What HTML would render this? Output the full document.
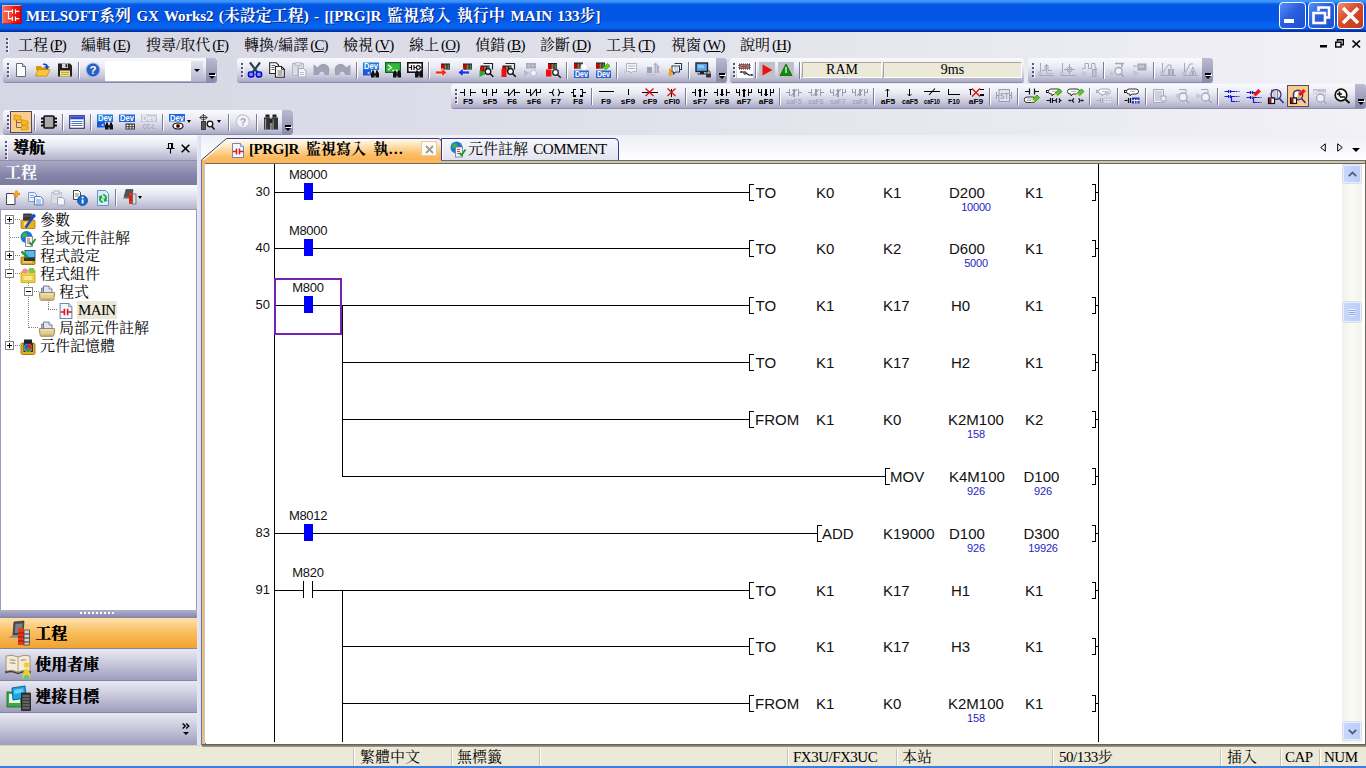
<!DOCTYPE html>
<html lang="zh-Hant"><head><meta charset="utf-8"><title>MELSOFT GX Works2</title>
<style>*{box-sizing:border-box;margin:0;padding:0}
html,body{width:1366px;height:768px;overflow:hidden}
body{position:relative;font-family:"Liberation Serif","Noto Serif CJK SC",serif;font-size:15px;color:#000;background:linear-gradient(90deg,#d6d6e4 0%,#dfdfea 40%,#f1f1f6 100%)}
.abs{position:absolute}
#title{position:absolute;left:0;top:0;width:1366px;height:32px;background:linear-gradient(180deg,#3c96fc 0px,#3a92fa 2px,#1568e8 3.500px,#0558e2 5px,#0355e4 8px,#0355e4 19px,#0560ee 23px,#0666f2 27px,#0558e0 29px,#0038b4 30.500px,#002c9e 32px)}
#title .cap{position:absolute;left:26px;top:5px;color:#fff;font-weight:bold;font-size:16px;line-height:21px;white-space:nowrap;text-shadow:1px 1px 0 #0a2a80}
#title .cap{word-spacing:1.800px}
#title .cap .l{letter-spacing:-.1px;font-size:15px}
.tbtn{position:absolute;top:2px;width:27px;height:27px;border:1px solid #fff;border-radius:4px;background:linear-gradient(135deg,#5a8ef2 0%,#2a5fe0 45%,#1d50d0 100%)}
.tbtn.tcl{background:linear-gradient(135deg,#f0906c 0%,#d9492a 45%,#c2391c 100%)}
#menubar{position:absolute;left:0;top:31px;width:1366px;height:27px}
.mi{position:absolute;top:4px;font-size:15px;line-height:20px;white-space:nowrap}
.mi .k{letter-spacing:-.8px;margin-left:2px}
.grip{position:absolute;width:2px;background:repeating-linear-gradient(180deg,#55557a 0 2px,transparent 2px 4px);box-shadow:1px 1px 0 rgba(255,255,255,.7)}
.tb{position:absolute;height:25px;border-radius:3px 0 3px 3px;background:linear-gradient(180deg,#f9f9fe 0%,#ececf5 35%,#c9c9dc 75%,#a9a8c4 100%);box-shadow:0 1px 0 #8c8bab}
.tb .ov{position:absolute;right:0;top:0;width:11px;height:100%;border-radius:0 3px 3px 0;background:linear-gradient(180deg,#bcbbd2 0%,#8a89ab 100%)}
.tb .ov i{position:absolute;left:3px;top:15px;width:6px;height:1.5px;background:#000;box-shadow:1px 1px 0 #fff}
.tb .ov b{position:absolute;left:3px;top:18px;width:0;height:0;border:3px solid transparent;border-top:3px solid #000;border-bottom:0}
.sep{position:absolute;width:2px;height:17px;border-left:1px solid #7c7b9e;border-right:1px solid #fff}
.ic{position:absolute;width:16px;height:16px;overflow:visible}
.hl{position:absolute;width:22px;height:22px;background:#fbcc8a;border:1px solid #4b4b6f}
.dda{position:absolute;width:0;height:0;border:2.500px solid transparent;border-top:3px solid #000;border-bottom:0}
.combo{position:absolute;width:98px;height:20px;background:#fff}
.combo .cbtn{position:absolute;right:0;top:0;width:12px;height:20px;background:linear-gradient(180deg,#e4e4f0,#b6b5cf)}
.combo .cbtn b{position:absolute;left:3px;top:8px;width:0;height:0;border:3px solid transparent;border-top:3px solid #000;border-bottom:0}
.ibox{position:absolute;height:16px;background:#ece9d8;border:1px solid #aca899;border-right-color:#fff;border-bottom-color:#fff;font-size:14px;line-height:14px;text-align:center}
/* nav */
#nav{position:absolute;left:0;top:135px;width:197px;height:610px;background:#fff;border-left:1px solid #9c9bb8;border-right:1px solid #9c9bb8}
.nhead{position:absolute;left:-1px;top:0;width:197px;height:25px;background:linear-gradient(180deg,#fdfdff 0%,#e6e6f0 45%,#b4b3cc 100%)}
.nhead .nt{position:absolute;left:13px;top:3px;font-weight:bold;font-size:16px;line-height:20px;text-shadow:.4px 0 0 #000}
.ncap{position:absolute;left:-1px;top:25px;width:197px;height:25px;background:linear-gradient(180deg,#a9a8c3 0%,#8584a8 60%,#7a799e 100%);color:#fff;font-weight:bold;font-size:16px;line-height:24px;padding-left:5px;border-top:1px solid #8f8eaf}
.ntb{position:absolute;left:-1px;top:50px;width:197px;height:25px;background:linear-gradient(180deg,#fbfbff 0%,#e4e4ef 45%,#b6b5ce 100%);border-bottom:1px solid #9897b5}
.tree{position:absolute;left:0;top:75px;width:195px;height:400px;font-size:15px}
.trow{position:absolute;left:0;height:18px;width:195px}
.tl{position:absolute;top:0;font-size:15px;line-height:18px;white-space:nowrap;padding:0 1px}
.tl.sel{background:#ece9d8;letter-spacing:-.6px}
.exp{z-index:2;position:absolute;width:9px;height:9px;border:1px solid #808080;background:#fff}
.exp i{position:absolute;left:1px;top:3px;width:5px;height:1px;background:#000}
.exp b{position:absolute;left:3px;top:1px;width:1px;height:5px;background:#000}
.hdot{position:absolute;height:1px;background:repeating-linear-gradient(90deg,#808080 0 1px,transparent 1px 2px)}
.vdot{position:absolute;width:1px;background:repeating-linear-gradient(180deg,#808080 0 1px,transparent 1px 2px)}
.nsplit{position:absolute;left:-1px;top:475px;width:197px;height:7px;background:linear-gradient(180deg,#b0afca,#8c8bb0)}
.nsplit i{position:absolute;left:80px;top:2px;width:36px;height:2px;background:repeating-linear-gradient(90deg,#fff 0 2px,transparent 2px 4px)}
.nbtn{position:absolute;left:-1px;width:197px;height:32px;background:linear-gradient(180deg,#e9e9f2 0%,#cdcddf 40%,#9e9dbd 100%);border-top:1px solid #8685a6;font-weight:bold;font-size:16px}
.nbtn span{position:absolute;left:35px;top:5px;line-height:22px;text-shadow:.4px 0 0 #000}
.nbtn.act{background:linear-gradient(180deg,#fde2ae 0%,#f9bf5f 45%,#f0a22c 100%)}
.nbtn.last{height:33px}
.nbtn em{position:absolute;left:180px;top:2px;font-style:normal;font-size:14px;font-weight:bold;line-height:18px;font-family:"Liberation Sans","Noto Sans CJK TC",sans-serif}
/* tabs */
.tabt{position:absolute;font-size:15px;line-height:21px;white-space:nowrap;word-spacing:1.500px}
.tabt.act{font-weight:bold;word-spacing:3.500px}
.tabt .l{letter-spacing:-.45px}
.tabx{position:absolute;width:16px;height:15px;background:#fdfbf2;border:1px solid #dccdb0}
.tab2{position:absolute;width:178px;height:23px;border:1px solid #2d3c9a;border-bottom:1px solid #6a6a70;border-radius:1px 5px 0 0;background:linear-gradient(180deg,#f6f6fb 0%,#ebebf5 60%,#e2e3f0 100%);box-shadow:inset 1px 1px 0 #fff}
/* editor */
#edframe{position:absolute;left:201px;top:160px;width:1165px;height:586px;background:#c9c5b5;border-left:1px solid #77768f;border-top:1px solid #6f6d60;border-right:1px solid #5a5742}
#edframe:before{content:"";position:absolute;left:3px;top:2px;width:1159px;height:581px;border:1px solid #6d6b58;border-bottom:2px solid #57533f;background:#fff}
#edorange{position:absolute;left:202px;top:161px;width:2px;height:583px;background:#ecbb88}
#edorange:after{content:"";position:absolute;left:0;top:-1px;width:239px;height:3px;background:#fbb95e}
#ed{position:absolute;left:205px;top:164px;width:1157px;height:579px;background:#fff;overflow:hidden;font-family:"Liberation Sans","Noto Sans CJK TC",sans-serif}
.ln{position:absolute;background:#000}
.ct{position:absolute;width:9px;height:17px;background:#0000ff}
.dl{position:absolute;width:80px;text-align:center;font-size:13px;letter-spacing:-.3px;line-height:14px;color:#111;margin-top:2px}
.sn{position:absolute;width:40px;text-align:right;font-size:13px;line-height:16px;color:#111;margin:1px 0 0 1px}
.it{position:absolute;font-size:15px;line-height:17px;white-space:nowrap;color:#111;margin-left:-1px}
.vl{position:absolute;width:60px;text-align:center;font-size:11px;line-height:12px;color:#2424c4;margin-top:-1px;letter-spacing:-.2px}
.br{position:absolute;width:5px;height:17px;border:1px solid #000;border-right:0}
.br.r{width:4px;border:1px solid #000;border-left:0}
.selbox{position:absolute;width:68px;height:57px;border:2px solid #7424b4}
.vsb{position:absolute;left:1137px;top:0;width:20px;height:579px;background:linear-gradient(90deg,#f1f1e8,#fbfbf6 50%,#f4f4ec)}
.sbtn{position:absolute;left:1px;width:18px;height:18px;border:1px solid #e8eefc;border-radius:2px;background:linear-gradient(90deg,#c9d7fb,#bccdf8);box-shadow:0 0 0 .5px #b4c4ee}
.sbtn.thumb i{position:absolute;left:5px;top:6px;width:6px;height:7px;background:repeating-linear-gradient(180deg,#eef3fe 0 1px,#8ea4dc 1px 2px)}
/* status */
#status{position:absolute;left:0;top:745px;width:1366px;height:21px;background:#ece9d8;border-top:1px solid #d6d2c2}
#status:before{content:"";position:absolute;left:202px;top:-2px;width:1164px;height:3px;background:linear-gradient(180deg,#5b5746,#a7a392)}
.st{position:absolute;top:2px;font-size:15px;line-height:18px;white-space:nowrap}
.st .l{letter-spacing:-.5px}
.ssep{position:absolute;top:3px;width:2px;height:17px;border-left:1px solid #c5c2b2;border-right:1px solid #fff}
#bottomline{position:absolute;left:0;top:766px;width:1366px;height:2px;background:#3b7fdc}
#gap{position:absolute}
#tabstrip{position:absolute;left:197px;top:135px;width:1169px;height:25px;background:linear-gradient(180deg,#eeeef6 0%,#f3f3f9 30%,#fbfbfd 75%,#ffffff 100%)}
#gapstrip{position:absolute;left:197px;top:136px;width:4px;height:609px;background:linear-gradient(90deg,#e6e9f7,#d9def2)}
</style></head>
<body>
<div id="title">
<svg class="ic" style="left:2px;top:5px;width:20px;height:19px" viewBox="0 0 20 19"><defs><linearGradient id="apg" x1="0" y1="0" x2="1" y2="0"><stop offset="0" stop-color="#f8a090"/><stop offset=".08" stop-color="#f06858"/><stop offset=".45" stop-color="#f04030"/><stop offset=".6" stop-color="#f01810"/><stop offset="1" stop-color="#e00808"/></linearGradient></defs><rect width="19.500" height="19" fill="url(#apg)"/><rect width="19.500" height="1" fill="#fbd0c8" opacity=".8"/><rect x="18.500" width="1" height="19" fill="#900" opacity=".6"/><rect y="18" width="19.500" height="1" fill="#900" opacity=".5"/><path d="M2 6.300h8.500M13.500 6.300h3.700M6.500 6.300v7.300h4M13.500 13.600h3.700M10.500 4.200v4.600M13.500 4.200v4.600M10.500 11.400v4.500M13.500 11.400v4.500" stroke="#fff" stroke-width="1.200" fill="none"/></svg>
<div class="cap"><span class="l">MELSOFT</span>系列 <span class="l">GX Works2 (</span>未設定工程<span class="l">) - [[PRG]R</span> 監視寫入 執行中 <span class="l">MAIN 133</span>步<span class="l">]</span></div>
<div class="tbtn" style="left:1279px"><svg class="ic" style="left:0px;top:0px;width:25px;height:25px" viewBox="0 0 25 25"><rect x="4" y="16" width="10" height="4" fill="#fff"/></svg></div>
<div class="tbtn" style="left:1308px"><svg class="ic" style="left:0px;top:0px;width:25px;height:25px" viewBox="0 0 25 25"><path d="M9.500 8v-3.500h10.500v10h-3" fill="none" stroke="#fff" stroke-width="2.600"/><rect x="4.500" y="10" width="11.500" height="10" fill="none" stroke="#fff" stroke-width="2.600"/></svg></div>
<div class="tbtn tcl" style="left:1337px"><svg class="ic" style="left:0px;top:0px;width:25px;height:25px" viewBox="0 0 25 25"><path d="M5 5L20 20M20 5L5 20" stroke="#fff" stroke-width="3.600"/></svg></div>
</div>
<div id="menubar">
<div class="grip" style="left:6px;top:7px;height:14px"></div>
<div class="mi" style="left:18px">工程<span class="k">(<u>P</u>)</span></div>
<div class="mi" style="left:81px">編輯<span class="k">(<u>E</u>)</span></div>
<div class="mi" style="left:146px">搜尋/取代<span class="k">(<u>F</u>)</span></div>
<div class="mi" style="left:244px">轉換/編譯<span class="k">(<u>C</u>)</span></div>
<div class="mi" style="left:343px">檢視<span class="k">(<u>V</u>)</span></div>
<div class="mi" style="left:409px">線上<span class="k">(<u>O</u>)</span></div>
<div class="mi" style="left:475px">偵錯<span class="k">(<u>B</u>)</span></div>
<div class="mi" style="left:540px">診斷<span class="k">(<u>D</u>)</span></div>
<div class="mi" style="left:606px">工具<span class="k">(<u>T</u>)</span></div>
<div class="mi" style="left:671px">視窗<span class="k">(<u>W</u>)</span></div>
<div class="mi" style="left:740px">說明<span class="k">(<u>H</u>)</span></div>
<svg class="ic" style="left:1320px;top:13px;width:8px;height:4px" viewBox="0 0 8 4"><rect x="0" y="1" width="7" height="2.500" fill="#000"/></svg><svg class="ic" style="left:1335px;top:8px;width:9px;height:9px" viewBox="0 0 9 9"><path d="M2.500 2.500v-1.800h5.800v5h-2" fill="none" stroke="#000" stroke-width="1.400"/><rect x="0.700" y="3.200" width="5.300" height="4.800" fill="none" stroke="#000" stroke-width="1.400"/></svg><svg class="ic" style="left:1352px;top:9px;width:9px;height:8px" viewBox="0 0 9 8"><path d="M0.500 0.500L8 7.500M8 0.500L0.500 7.500" stroke="#000" stroke-width="1.700"/></svg>
</div>
<div class="tb" style="left:3px;top:58px;width:214px;height:24px"><div class="grip" style="left:4px;top:5px;height:14px"></div><svg class="ic" style="left:10px;top:4px;width:16px;height:16px" viewBox="0 0 16 16"><path d="M3.500 1.500h6l3 3v10h-9z" fill="#fff" stroke="#6a6a7a"/><path d="M9.500 1.500v3h3" fill="#e8e8f0" stroke="#6a6a7a"/></svg><svg class="ic" style="left:32px;top:4px;width:16px;height:16px" viewBox="0 0 16 16"><path d="M1 4h5l1 1.500h5v3h-11z" fill="#d89a10"/><path d="M0.500 14l2.500-6.500h12l-3 6.500z" fill="#f8c838" stroke="#c88a08" stroke-width=".8"/><path d="M8 1.500c3.500-.5 5 1 5 3h2l-3 3-3-3h2c0-1-1-1.800-3-1.500z" fill="#1848c8"/></svg><svg class="ic" style="left:54px;top:4px;width:16px;height:16px" viewBox="0 0 16 16"><path d="M1 1.500h12l2 2v11h-14z" fill="#222"/><rect x="5" y="1.500" width="6" height="4.500" fill="#d8d8d8"/><rect x="8.500" y="2.200" width="1.700" height="3" fill="#222"/><rect x="3" y="8.500" width="10" height="6" fill="#f0e080"/><path d="M4 10.500h8M4 12.500h8" stroke="#b0a040" stroke-width=".8"/></svg><div class="sep" style="left:75px;top:4px"></div><svg class="ic" style="left:82px;top:4px;width:16px;height:16px" viewBox="0 0 16 16"><circle cx="8" cy="8" r="7" fill="#2a5ec0" stroke="#a8c0f0" stroke-width="1.200"/><text x="8" y="12.200" text-anchor="middle" font-size="11.500" fill="#fff" font-family="Liberation Sans,sans-serif" font-weight="bold">?</text></svg><div class="combo" style="left:102px;top:3px"><div class="cbtn"><b></b></div></div><div class="ov"><i></i><b></b></div></div>
<div class="tb" style="left:237px;top:58px;width:490px;height:24px"><div class="grip" style="left:4px;top:5px;height:14px"></div><svg class="ic" style="left:10px;top:4px;width:16px;height:16px" viewBox="0 0 16 16"><path d="M3 0.500l7.500 10M13 0.500l-7.500 10" stroke="#24404a" stroke-width="2.100"/><rect x="1.500" y="10" width="5.200" height="4.800" rx="1.500" fill="#7a9af4" stroke="#0a0ad8" stroke-width="1.700"/><rect x="9.300" y="10" width="5.200" height="4.800" rx="1.500" fill="#7a9af4" stroke="#0a0ad8" stroke-width="1.700"/></svg><svg class="ic" style="left:32px;top:4px;width:16px;height:16px" viewBox="0 0 16 16"><path d="M0.700 0.700h6.500l2.300 2.300v8.500h-8.800z" fill="#fff" stroke="#222" stroke-width="1.100"/><path d="M2.500 3.500h4M2.500 5.500h3M2.500 7.500h3" stroke="#555" stroke-width=".9"/><path d="M6.500 4.500h6l2.800 2.800v8h-8.800z" fill="#fff" stroke="#222" stroke-width="1.100"/><path d="M8.500 9h5M8.500 11h5M8.500 13h5" stroke="#555" stroke-width=".9"/><path d="M12.500 4.500v2.800h2.800" fill="none" stroke="#222" stroke-width=".9"/></svg><svg class="ic" style="left:54px;top:4px;width:16px;height:16px" viewBox="0 0 16 16"><path d="M1.500 1.500h11v9" fill="#dcdce6" stroke="#b4b4c4"/><rect x="1.500" y="1.500" width="5.500" height="12" fill="#dcdce6" stroke="#b4b4c4"/><rect x="4" y="0.800" width="6" height="2.400" fill="#eee" stroke="#a8a8b8" stroke-width=".8"/><path d="M7.500 6.500h5l2.500 2.500v6h-7.500z" fill="#f6f6fa" stroke="#a8a8b8"/><path d="M9 10.500h4M9 12.500h4" stroke="#b4b4c4" stroke-width=".9"/></svg><svg class="ic" style="left:76px;top:4px;width:16px;height:16px" viewBox="0 0 16 16"><path d="M0.500 2.500l4.500 3a5.500 5.500 0 0 1 11 4.500v3h-4.500a2.800 2.800 0 1 0-5.500 0h-5.500z" fill="#a2a2b6"/></svg><svg class="ic" style="left:98px;top:4px;width:16px;height:16px" viewBox="0 0 16 16"><path d="M15.500 2.500l-4.500 3a5.500 5.500 0 0 0-11 4.500v3h4.500a2.800 2.800 0 1 1 5.500 0h5.500z" fill="#a2a2b6"/></svg><div class="sep" style="left:119px;top:4px"></div><svg class="ic" style="left:126px;top:4px;width:16px;height:16px" viewBox="0 0 16 16"><rect x="0" y="0.500" width="16" height="7.500" fill="#1a78e0"/><rect x="0" y="8" width="8" height="5.500" fill="#1a58d8"/><path d="M6.500 9.500l-2.500 1.500 2.500 1.500z" fill="#cfe0ff"/><text x="1" y="7.4" font-size="8.500" fill="#fff" textLength="14" lengthAdjust="spacingAndGlyphs" font-family="Liberation Sans,sans-serif" font-weight="bold">Dev</text><path d="M9 8.5h2v2h-2zM13 8.5h2v2h-2zM8 10.5h3.500v5h-3.500zM12.5 10.5h3.500v5h-3.500zM11 11.5h2v2h-2z" fill="#111"/></svg><svg class="ic" style="left:148px;top:4px;width:16px;height:16px" viewBox="0 0 16 16"><rect x="0.600" y="0.600" width="14.800" height="9.800" fill="#30b838" stroke="#1a5a2a" stroke-width="1.200"/><path d="M3 3l3.500 2.500-3.500 2.500M7.500 8.500h5" stroke="#fff" stroke-width="1.300" fill="none"/><path d="M9 8.5h2v2h-2zM13 8.5h2v2h-2zM8 10.5h3.500v5h-3.500zM12.5 10.5h3.500v5h-3.500zM11 11.5h2v2h-2z" fill="#111"/></svg><svg class="ic" style="left:170px;top:4px;width:16px;height:16px" viewBox="0 0 16 16"><rect x="0.800" y="0.800" width="14.400" height="9.400" fill="#fff" stroke="#111" stroke-width="1.600"/><path d="M2 5.500h2.500M4.500 3v5M7 3v5M7 5.500h2.500M13 5.500h1.500" stroke="#111" stroke-width="1.200" fill="none"/><circle cx="11.300" cy="5.500" r="1.900" fill="#fff" stroke="#111" stroke-width="1.200"/><path d="M9 8.5h2v2h-2zM13 8.5h2v2h-2zM8 10.5h3.500v5h-3.500zM12.5 10.5h3.500v5h-3.500zM11 11.5h2v2h-2z" fill="#111"/></svg><div class="sep" style="left:191px;top:4px"></div><svg class="ic" style="left:198px;top:4px;width:16px;height:16px" viewBox="0 0 16 16"><rect x="6" y="1.5" width="9" height="6" fill="#222"/><rect x="6" y="2.5" width="3" height="5" fill="#c00"/><rect x="9.5" y="2.5" width="2" height="5" fill="#8a7a50"/><rect x="12.5" y="2.5" width="2" height="5" fill="#5a7a50"/><path d="M0.300 9h6.700v-2.800l5 4.300-5 4.300v-2.800h-6.700z" fill="#f03010" stroke="#fff" stroke-width=".6"/></svg><svg class="ic" style="left:220px;top:4px;width:16px;height:16px" viewBox="0 0 16 16"><rect x="6" y="1.5" width="9" height="6" fill="#222"/><rect x="6" y="2.5" width="3" height="5" fill="#c00"/><rect x="9.5" y="2.5" width="2" height="5" fill="#8a7a50"/><rect x="12.5" y="2.5" width="2" height="5" fill="#5a7a50"/><path d="M12.500 9h-6.500v-2.800l-5 4.300 5 4.300v-2.800h6.500z" fill="#1838e8" stroke="#fff" stroke-width=".6"/></svg><svg class="ic" style="left:242px;top:4px;width:16px;height:16px" viewBox="0 0 16 16"><path d="M4.500 1.500h9v6" fill="none" stroke="#222" stroke-width="1.200"/><rect x="1.5" y="3.5" width="9" height="6" fill="#222"/><rect x="1.5" y="4.5" width="3" height="5" fill="#c00"/><rect x="5.0" y="4.5" width="2" height="5" fill="#8a7a50"/><rect x="8.0" y="4.5" width="2" height="5" fill="#5a7a50"/><path d="M0.500 8.500l7 3-7 3.500z" fill="#20b020"/><rect x="1" y="5" width="3" height="3.500" fill="#e01010"/><path d="M10.959999999999999 11.459999999999999L14.3 14.8" stroke="#111" stroke-width="1.600"/><circle cx="9" cy="9.5" r="2.8" fill="#fff" stroke="#111" stroke-width="1.300"/></svg><svg class="ic" style="left:264px;top:4px;width:16px;height:16px" viewBox="0 0 16 16"><path d="M4.500 1.500h9v6" fill="none" stroke="#222" stroke-width="1.200"/><rect x="1.5" y="3.5" width="9" height="6" fill="#222"/><rect x="1.5" y="4.5" width="3" height="5" fill="#c00"/><rect x="5.0" y="4.5" width="2" height="5" fill="#8a7a50"/><rect x="8.0" y="4.5" width="2" height="5" fill="#5a7a50"/><rect x="0.500" y="7" width="5" height="8" fill="#f01010"/><path d="M11.459999999999999 11.459999999999999L14.8 14.8" stroke="#111" stroke-width="1.600"/><circle cx="9.5" cy="9.5" r="2.8" fill="#fff" stroke="#111" stroke-width="1.300"/></svg><svg class="ic" style="left:286px;top:4px;width:16px;height:16px" viewBox="0 0 16 16"><rect x="3" y="1" width="10" height="5.500" fill="#a8a8bc"/><path d="M6 1v5.500M9.500 1v5.500M3 3.500h10" stroke="#c8c8d8" stroke-width=".8"/><path d="M1 8l5 3-5 3.500z" fill="#b8b8c8"/><circle cx="10.500" cy="11" r="3" fill="#f4f4f8" stroke="#b8b8c8"/></svg><svg class="ic" style="left:308px;top:4px;width:16px;height:16px" viewBox="0 0 16 16"><rect x="3" y="1" width="9" height="6" fill="#222"/><rect x="3" y="2" width="3" height="5" fill="#c00"/><rect x="6.5" y="2" width="2" height="5" fill="#8a7a50"/><rect x="9.5" y="2" width="2" height="5" fill="#5a7a50"/><rect x="1" y="7.500" width="5.500" height="7" fill="#f01010"/><path d="M12.459999999999999 12.459999999999999L15.8 15.8" stroke="#223" stroke-width="1.600"/><circle cx="10.5" cy="10.5" r="2.8" fill="#fff" stroke="#223" stroke-width="1.300"/></svg><div class="sep" style="left:329px;top:4px"></div><svg class="ic" style="left:336px;top:4px;width:16px;height:16px" viewBox="0 0 16 16"><rect x="1" y="0.5" width="9" height="6" fill="#222"/><rect x="1" y="1.5" width="3" height="5" fill="#c00"/><rect x="4.5" y="1.5" width="2" height="5" fill="#8a7a50"/><rect x="7.5" y="1.5" width="2" height="5" fill="#5a7a50"/><circle cx="11" cy="5" r="3.200" fill="#fff" stroke="#dde" stroke-width=".6"/><rect x="1" y="8.500" width="15" height="7.500" fill="#2a68d0"/><text x="2" y="15.4" font-size="8.500" fill="#fff" textLength="13" lengthAdjust="spacingAndGlyphs" font-family="Liberation Sans,sans-serif" font-weight="bold">Dev</text></svg><svg class="ic" style="left:358px;top:4px;width:16px;height:16px" viewBox="0 0 16 16"><rect x="1" y="0.5" width="9" height="6" fill="#222"/><rect x="1" y="1.5" width="3" height="5" fill="#c00"/><rect x="4.5" y="1.5" width="2" height="5" fill="#8a7a50"/><rect x="7.5" y="1.5" width="2" height="5" fill="#5a7a50"/><path d="M8 5.500l4.500-4 2.500 2.500-4.500 4z" fill="#58d020" stroke="#2a8010" stroke-width=".6"/><path d="M7 8.500l1-3 2.500 2.500z" fill="#e8d840"/><rect x="1" y="8.500" width="15" height="7.500" fill="#2a68d0"/><text x="2" y="15.4" font-size="8.500" fill="#fff" textLength="13" lengthAdjust="spacingAndGlyphs" font-family="Liberation Sans,sans-serif" font-weight="bold">Dev</text></svg><div class="sep" style="left:379px;top:4px"></div><svg class="ic" style="left:386px;top:4px;width:16px;height:16px" viewBox="0 0 16 16"><path d="M3.500 1.500h10v8h-4l-2 2v-2h-4z" fill="#f6f6fa" stroke="#b4b4c6"/><path d="M5 4h7M5 6.500h7" stroke="#b4b4c6"/><path d="M1.500 8v6h5" fill="none" stroke="#c4c4d4"/></svg><svg class="ic" style="left:408px;top:4px;width:16px;height:16px" viewBox="0 0 16 16"><rect x="2" y="5" width="5" height="6" fill="#a0a0b4"/><path d="M8 3l2.500-2.500 2.500 2.500h-1.500v8h-2v-8zM11 5l2-2 2 2h-1v6h-2v-6z" fill="#b0b0c4"/><path d="M1 13h10" stroke="#b8b8c8"/></svg><svg class="ic" style="left:430px;top:4px;width:16px;height:16px" viewBox="0 0 16 16"><path d="M7.500 1.500h7v6h-2" fill="#fff" stroke="#223a5a" stroke-width="1.100"/><path d="M5 4h7.500v6h-4l-2 2v-2h-1.500z" fill="#fff" stroke="#223a5a" stroke-width="1.100"/><path d="M7 6h4M7 8h4" stroke="#8a98b8" stroke-width=".8"/><path d="M2 6.500h3.500v2h-1.500v3h2l-2.800 3.500-2.800-3.500h1.600z" fill="#f8a010"/></svg><div class="sep" style="left:451px;top:4px"></div><svg class="ic" style="left:458px;top:4px;width:16px;height:16px" viewBox="0 0 16 16"><rect x="1" y="1" width="11.500" height="8.500" fill="#58a8f0" stroke="#222" stroke-width="1.400"/><rect x="3" y="3" width="6" height="3" fill="#88c8f8"/><path d="M5 10h4v1.500h2.500v1h-9v-1h2.500z" fill="#222"/><rect x="11" y="11.500" width="5" height="4" rx="1" fill="#333"/><path d="M12 11.500v-1.200a1.500 1.500 0 0 1 3 0v1.200" fill="none" stroke="#333"/></svg><div class="ov"><i></i><b></b></div></div>
<div class="tb" style="left:730px;top:58px;width:294px;height:24px;border-radius:3px"><div class="grip" style="left:3px;top:5px;height:14px"></div><svg class="ic" style="left:7px;top:4px;width:16px;height:16px" viewBox="0 0 16 16"><rect x="0" y="0" width="16" height="16" fill="#fff"/><rect x="2" y="2" width="11" height="5" fill="#a07070" stroke="#222" stroke-width="1" stroke-dasharray="1 1"/><path d="M5 4.500h5" stroke="#c03030"/><path d="M4 10h3l5 3h3M4 9v2M15 12v2" stroke="#111" stroke-width="1.200" fill="none"/><circle cx="8" cy="11" r="1.200" fill="#fff" stroke="#111"/></svg><div class="sep" style="left:25px;top:4px"></div><svg class="ic" style="left:29px;top:4px;width:16px;height:16px" viewBox="0 0 16 16"><rect x="0" y="0" width="16" height="16" fill="#c0c0c8"/><path d="M3.500 2.500l10 5.500-10 5.500z" fill="#f01010"/></svg><svg class="ic" style="left:48px;top:4px;width:16px;height:16px" viewBox="0 0 16 16"><rect x="0" y="0" width="16" height="16" fill="#c0c0c8"/><path d="M8 2l6 11.500h-12z" fill="#108a10" stroke="#0a6a0a" stroke-width=".8"/><path d="M8 5v6" stroke="#d8f8d8" stroke-width="1.400"/></svg><div class="sep" style="left:69px;top:4px"></div><div class="ibox" style="left:72px;top:4px;width:80px">RAM</div><div class="ibox" style="left:153px;top:4px;width:139px">9ms</div></div>
<div class="tb" style="left:1028px;top:58px;width:185px;height:24px"><div class="grip" style="left:4px;top:5px;height:14px"></div><svg class="ic" style="left:10px;top:4px;width:16px;height:16px" viewBox="0 0 16 16"><path d="M2.500 1v13M0 13.500h16" stroke="#a6a6bc" fill="none"/><path d="M4 8.500h3v-5h3v5h4M8.500 2v9" stroke="#a6a6bc" fill="none"/><path d="M0 9l5 2.500-5 2.500z" fill="#c4c4d4"/><path d="M9 11.500h6" stroke="#a6a6bc" stroke-dasharray="2 1"/></svg><svg class="ic" style="left:32px;top:4px;width:16px;height:16px" viewBox="0 0 16 16"><path d="M2.500 1v13M0 13.500h16" stroke="#a6a6bc" fill="none"/><path d="M4 7.500h11M9.500 2v10" stroke="#a6a6bc" fill="none"/><circle cx="9.500" cy="7.500" r="2.500" fill="none" stroke="#a6a6bc"/><path d="M0 9l5 2.500-5 2.500z" fill="#c4c4d4"/></svg><svg class="ic" style="left:54px;top:4px;width:16px;height:16px" viewBox="0 0 16 16"><path d="M0 6.500h3v-5h3.500v5h3v-5h3.500v5h2" stroke="#a6a6bc" fill="none"/><rect x="10.500" y="7.500" width="3.500" height="7" fill="#c4c4d4" stroke="#a6a6bc"/><path d="M0 9l6 3-6 3z" fill="#c4c4d4"/></svg><div class="sep" style="left:75px;top:4px"></div><svg class="ic" style="left:82px;top:4px;width:16px;height:16px" viewBox="0 0 16 16"><path d="M5 1.500h9M12 1.500v4" stroke="#a6a6bc" stroke-width="1.600" fill="none"/><circle cx="8.500" cy="9" r="3.500" fill="#f0f0f6" stroke="#a6a6bc" stroke-width="1.300"/><path d="M11 12l3 3" stroke="#a6a6bc" stroke-width="1.600"/><path d="M0 9l5 2.500-5 2.500z" fill="#c4c4d4"/></svg><svg class="ic" style="left:104px;top:4px;width:16px;height:16px" viewBox="0 0 16 16"><rect x="5.500" y="1.500" width="9" height="7" fill="#a6a6bc"/><rect x="7" y="3" width="5" height="3" fill="#c4c4d4"/><path d="M1 4h4" stroke="#a6a6bc"/><path d="M1 8l7 3.500-7 3.500z" fill="#c4c4d4"/></svg><div class="sep" style="left:125px;top:4px"></div><svg class="ic" style="left:132px;top:4px;width:16px;height:16px" viewBox="0 0 16 16"><path d="M2.500 1v13M0 13.500h16" stroke="#a6a6bc" fill="none"/><path d="M3 11l5-8h3v10" stroke="#a6a6bc" fill="none"/><rect x="8" y="7" width="2" height="6" fill="#a6a6bc"/><rect x="12" y="7" width="2" height="6" fill="#a6a6bc"/><path d="M0 9l5 2.500-5 2.500z" fill="#c4c4d4"/></svg><svg class="ic" style="left:154px;top:4px;width:16px;height:16px" viewBox="0 0 16 16"><path d="M2.500 1v13M0 13.500h16" stroke="#a6a6bc" fill="none"/><path d="M3 11l5-9h3M8 13l3-8 3 8" stroke="#a6a6bc" fill="none"/><rect x="10" y="9" width="2" height="4" fill="#a6a6bc"/><path d="M0 9l5 2.500-5 2.500z" fill="#c4c4d4"/></svg><div class="ov"><i></i><b></b></div></div>
<div class="tb" style="left:451px;top:84px;width:915px;height:24px"><div class="grip" style="left:4px;top:5px;height:14px"></div><svg class="ic" style="left:9px;top:4px;width:16px;height:16px" viewBox="0 0 16 16"><g stroke="#000" stroke-width="1.100" fill="none" shape-rendering="crispEdges"><path d="M0 4.500h4M11 4.500h4.500M4.500 1v7M10.500 1v7"/></g><text x="3.0" y="15.600" font-size="7.6" fill="#000" textLength="10" lengthAdjust="spacingAndGlyphs" font-family="Liberation Sans,sans-serif" font-weight="bold">F5</text></svg><svg class="ic" style="left:31px;top:4px;width:16px;height:16px" viewBox="0 0 16 16"><g stroke="#000" stroke-width="1.100" fill="none" shape-rendering="crispEdges"><path d="M0.500 1v3.500h4M4.500 1v7M10.500 1v7M10.500 4.500h4v-3.500"/></g><text x="0.8" y="15.600" font-size="7.6" fill="#000" textLength="14.5" lengthAdjust="spacingAndGlyphs" font-family="Liberation Sans,sans-serif" font-weight="bold">sF5</text></svg><svg class="ic" style="left:53px;top:4px;width:16px;height:16px" viewBox="0 0 16 16"><g stroke="#000" stroke-width="1.100" fill="none" shape-rendering="crispEdges"><path d="M0 4.500h4M11 4.500h4.500M4.500 1v7M10.500 1v7"/><path d="M10.500 1l-6 7" shape-rendering="auto"/></g><text x="3.0" y="15.600" font-size="7.6" fill="#000" textLength="10" lengthAdjust="spacingAndGlyphs" font-family="Liberation Sans,sans-serif" font-weight="bold">F6</text></svg><svg class="ic" style="left:75px;top:4px;width:16px;height:16px" viewBox="0 0 16 16"><g stroke="#000" stroke-width="1.100" fill="none" shape-rendering="crispEdges"><path d="M0.500 1v3.500h4M4.500 1v7M10.500 1v7M10.500 4.500h4v-3.500"/><path d="M10.500 1l-6 7" shape-rendering="auto"/></g><text x="0.8" y="15.600" font-size="7.6" fill="#000" textLength="14.5" lengthAdjust="spacingAndGlyphs" font-family="Liberation Sans,sans-serif" font-weight="bold">sF6</text></svg><svg class="ic" style="left:97px;top:4px;width:16px;height:16px" viewBox="0 0 16 16"><g stroke="#000" stroke-width="1.100" fill="none" shape-rendering="crispEdges"><path d="M0.500 4.500h3M12 4.500h3.500"/><path d="M6 1q-3 3.500 0 7M10 1q3 3.500 0 7" shape-rendering="auto"/></g><text x="3.0" y="15.600" font-size="7.6" fill="#000" textLength="10" lengthAdjust="spacingAndGlyphs" font-family="Liberation Sans,sans-serif" font-weight="bold">F7</text></svg><svg class="ic" style="left:119px;top:4px;width:16px;height:16px" viewBox="0 0 16 16"><g stroke="#000" stroke-width="1.100" fill="none" shape-rendering="crispEdges"><path d="M0.500 4.500h3M12.500 4.500h3M6 1.500h-2.500v6.500h2.500M10 1.500h2.500v6.500h-2.500"/></g><text x="3.0" y="15.600" font-size="7.6" fill="#000" textLength="10" lengthAdjust="spacingAndGlyphs" font-family="Liberation Sans,sans-serif" font-weight="bold">F8</text></svg><div class="sep" style="left:140px;top:4px"></div><svg class="ic" style="left:147px;top:4px;width:16px;height:16px" viewBox="0 0 16 16"><g stroke="#000" stroke-width="1.100" fill="none" shape-rendering="crispEdges"><path d="M0.500 3.500h15"/></g><text x="3.0" y="15.600" font-size="7.6" fill="#000" textLength="10" lengthAdjust="spacingAndGlyphs" font-family="Liberation Sans,sans-serif" font-weight="bold">F9</text></svg><svg class="ic" style="left:169px;top:4px;width:16px;height:16px" viewBox="0 0 16 16"><g stroke="#000" stroke-width="1.100" fill="none" shape-rendering="crispEdges"><path d="M8.500 0.500v6"/></g><text x="0.8" y="15.600" font-size="7.6" fill="#000" textLength="14.5" lengthAdjust="spacingAndGlyphs" font-family="Liberation Sans,sans-serif" font-weight="bold">sF9</text></svg><svg class="ic" style="left:191px;top:4px;width:16px;height:16px" viewBox="0 0 16 16"><g stroke="#000" stroke-width="1.100" fill="none" shape-rendering="crispEdges"><path d="M0 4.500h16"/><path d="M3.500 0.500l8 7.500M11.500 0.500l-8 7.500" stroke="#e01010" stroke-width="1.300" shape-rendering="auto"/></g><text x="0.8" y="15.600" font-size="7.6" fill="#000" textLength="14.5" lengthAdjust="spacingAndGlyphs" font-family="Liberation Sans,sans-serif" font-weight="bold">cF9</text></svg><svg class="ic" style="left:213px;top:4px;width:16px;height:16px" viewBox="0 0 16 16"><g stroke="#000" stroke-width="1.100" fill="none" shape-rendering="crispEdges"><path d="M7.500 0.500v8"/><path d="M3.500 0.500l8 7.500M11.500 0.500l-8 7.500" stroke="#e01010" stroke-width="1.300" shape-rendering="auto"/></g><text x="0.0" y="15.600" font-size="7.4" fill="#000" textLength="16" lengthAdjust="spacingAndGlyphs" font-family="Liberation Sans,sans-serif" font-weight="bold">cFI0</text></svg><div class="sep" style="left:234px;top:4px"></div><svg class="ic" style="left:241px;top:4px;width:16px;height:16px" viewBox="0 0 16 16"><g stroke="#000" stroke-width="1.100" fill="none" shape-rendering="crispEdges"><path d="M0 4.500h3M12.500 4.500h3.500M3.500 1v7M12.500 1v7"/><path d="M8 8.500v-7.500"/><path d="M6 3l2-2 2 2" shape-rendering="auto" stroke-width=".9"/></g><text x="0.8" y="15.600" font-size="7.6" fill="#000" textLength="14.5" lengthAdjust="spacingAndGlyphs" font-family="Liberation Sans,sans-serif" font-weight="bold">sF7</text></svg><svg class="ic" style="left:263px;top:4px;width:16px;height:16px" viewBox="0 0 16 16"><g stroke="#000" stroke-width="1.100" fill="none" shape-rendering="crispEdges"><path d="M0 4.500h3M12.500 4.500h3.500M3.500 1v7M12.500 1v7"/><path d="M8 0.500v7.500"/><path d="M6 6l2 2 2-2" shape-rendering="auto" stroke-width=".9"/></g><text x="0.8" y="15.600" font-size="7.6" fill="#000" textLength="14.5" lengthAdjust="spacingAndGlyphs" font-family="Liberation Sans,sans-serif" font-weight="bold">sF8</text></svg><svg class="ic" style="left:285px;top:4px;width:16px;height:16px" viewBox="0 0 16 16"><g stroke="#000" stroke-width="1.100" fill="none" shape-rendering="crispEdges"><path d="M0.500 1v3.500h3M3.500 1v7M12.500 1v7M12.500 4.500h3v-3.500"/><path d="M8 8.500v-7.500"/><path d="M6 3l2-2 2 2" shape-rendering="auto" stroke-width=".9"/></g><text x="0.8" y="15.600" font-size="7.6" fill="#000" textLength="14.5" lengthAdjust="spacingAndGlyphs" font-family="Liberation Sans,sans-serif" font-weight="bold">aF7</text></svg><svg class="ic" style="left:307px;top:4px;width:16px;height:16px" viewBox="0 0 16 16"><g stroke="#000" stroke-width="1.100" fill="none" shape-rendering="crispEdges"><path d="M0.500 1v3.500h3M3.500 1v7M12.500 1v7M12.500 4.500h3v-3.500"/><path d="M8 0.500v7.500"/><path d="M6 6l2 2 2-2" shape-rendering="auto" stroke-width=".9"/></g><text x="0.8" y="15.600" font-size="7.6" fill="#000" textLength="14.5" lengthAdjust="spacingAndGlyphs" font-family="Liberation Sans,sans-serif" font-weight="bold">aF8</text></svg><div class="sep" style="left:328px;top:4px"></div><svg class="ic" style="left:335px;top:4px;width:16px;height:16px" viewBox="0 0 16 16"><g stroke="#9a9ab2" stroke-width="1.100" fill="none" shape-rendering="crispEdges"><path d="M0 4.500h3M12.500 4.500h3.500M3.500 1v7M12.500 1v7"/><path d="M8 8.500v-7.500"/><path d="M6 3l2-2 2 2" shape-rendering="auto" stroke-width=".9"/><path d="M11 1l-6 7" shape-rendering="auto"/></g><text x="0.2" y="15.600" font-size="7.2" fill="#9a9ab2" textLength="15.5" lengthAdjust="spacingAndGlyphs" font-family="Liberation Sans,sans-serif" >saF5</text></svg><svg class="ic" style="left:357px;top:4px;width:16px;height:16px" viewBox="0 0 16 16"><g stroke="#9a9ab2" stroke-width="1.100" fill="none" shape-rendering="crispEdges"><path d="M0 4.500h3M12.500 4.500h3.500M3.500 1v7M12.500 1v7"/><path d="M8 0.500v7.500"/><path d="M6 6l2 2 2-2" shape-rendering="auto" stroke-width=".9"/><path d="M11 1l-6 7" shape-rendering="auto"/></g><text x="0.2" y="15.600" font-size="7.2" fill="#9a9ab2" textLength="15.5" lengthAdjust="spacingAndGlyphs" font-family="Liberation Sans,sans-serif" >saF6</text></svg><svg class="ic" style="left:379px;top:4px;width:16px;height:16px" viewBox="0 0 16 16"><g stroke="#9a9ab2" stroke-width="1.100" fill="none" shape-rendering="crispEdges"><path d="M0.500 1v3.500h3M3.500 1v7M12.500 1v7M12.500 4.500h3v-3.500"/><path d="M8 8.500v-7.500"/><path d="M6 3l2-2 2 2" shape-rendering="auto" stroke-width=".9"/><path d="M11 1l-6 7" shape-rendering="auto"/></g><text x="0.2" y="15.600" font-size="7.2" fill="#9a9ab2" textLength="15.5" lengthAdjust="spacingAndGlyphs" font-family="Liberation Sans,sans-serif" >saF7</text></svg><svg class="ic" style="left:401px;top:4px;width:16px;height:16px" viewBox="0 0 16 16"><g stroke="#9a9ab2" stroke-width="1.100" fill="none" shape-rendering="crispEdges"><path d="M0.500 1v3.500h3M3.500 1v7M12.500 1v7M12.500 4.500h3v-3.500"/><path d="M8 0.500v7.500"/><path d="M6 6l2 2 2-2" shape-rendering="auto" stroke-width=".9"/><path d="M11 1l-6 7" shape-rendering="auto"/></g><text x="0.2" y="15.600" font-size="7.2" fill="#9a9ab2" textLength="15.5" lengthAdjust="spacingAndGlyphs" font-family="Liberation Sans,sans-serif" >saF8</text></svg><div class="sep" style="left:422px;top:4px"></div><svg class="ic" style="left:429px;top:4px;width:16px;height:16px" viewBox="0 0 16 16"><g stroke="#000" stroke-width="1.100" fill="none" shape-rendering="crispEdges"><path d="M7.5 8.500v-7.500"/><path d="M5.5 3l2-2 2 2" shape-rendering="auto" stroke-width=".9"/></g><text x="0.8" y="15.600" font-size="7.6" fill="#000" textLength="14.5" lengthAdjust="spacingAndGlyphs" font-family="Liberation Sans,sans-serif" font-weight="bold">aF5</text></svg><svg class="ic" style="left:451px;top:4px;width:16px;height:16px" viewBox="0 0 16 16"><g stroke="#000" stroke-width="1.100" fill="none" shape-rendering="crispEdges"><path d="M7.5 0.500v7.500"/><path d="M5.5 6l2 2 2-2" shape-rendering="auto" stroke-width=".9"/></g><text x="0.0" y="15.600" font-size="7.4" fill="#000" textLength="16" lengthAdjust="spacingAndGlyphs" font-family="Liberation Sans,sans-serif" font-weight="bold">caF5</text></svg><svg class="ic" style="left:473px;top:4px;width:16px;height:16px" viewBox="0 0 16 16"><g stroke="#000" stroke-width="1.100" fill="none" shape-rendering="crispEdges"><path d="M0 3.500h16"/><path d="M11 0.500l-6 6.500" shape-rendering="auto"/></g><text x="0.0" y="15.600" font-size="7.2" fill="#000" textLength="16" lengthAdjust="spacingAndGlyphs" font-family="Liberation Sans,sans-serif" font-weight="bold">caF10</text></svg><svg class="ic" style="left:495px;top:4px;width:16px;height:16px" viewBox="0 0 16 16"><g stroke="#000" stroke-width="1.100" fill="none" shape-rendering="crispEdges"><path d="M2.500 1v5.500h11.500"/></g><text x="2.0" y="15.600" font-size="7.6" fill="#000" textLength="12" lengthAdjust="spacingAndGlyphs" font-family="Liberation Sans,sans-serif" font-weight="bold">F10</text></svg><svg class="ic" style="left:517px;top:4px;width:16px;height:16px" viewBox="0 0 16 16"><g stroke="#000" stroke-width="1.100" fill="none" shape-rendering="crispEdges"><path d="M1 1.500h3M2.500 1.500v5.500M12 1.500h3.500M12 7h3.500" /><path d="M4 0.500l8 8M12 0.500l-8 8" stroke="#e01010" stroke-width="1.300" shape-rendering="auto"/></g><text x="0.8" y="15.600" font-size="7.6" fill="#000" textLength="14.5" lengthAdjust="spacingAndGlyphs" font-family="Liberation Sans,sans-serif" font-weight="bold">aF9</text></svg><div class="sep" style="left:538px;top:4px"></div><svg class="ic" style="left:545px;top:4px;width:16px;height:16px" viewBox="0 0 16 16"><rect x="3" y="1.500" width="10.500" height="12" fill="#e4e4ee" stroke="#9a9ab2"/><path d="M0.500 4v7M15.500 4v7M0.500 7.500h2.500M13.500 7.500h2" stroke="#9a9ab2"/><text x="4" y="11" font-size="8.500" fill="#9a9ab2" textLength="8.500" lengthAdjust="spacingAndGlyphs" font-family="Liberation Sans,sans-serif" font-weight="bold">ST</text></svg><div class="sep" style="left:566px;top:4px"></div><svg class="ic" style="left:573px;top:4px;width:16px;height:16px" viewBox="0 0 16 16"><path d="M1 3.500h4.500M10.500 3.500h4.500M5.500 0.500v6M10.500 0.500v6" stroke="#111" stroke-width="1.200" fill="none"/><path d="M3 9h6a2.500 2.500 0 0 1 0 5.500h-6a2.500 2.500 0 0 1 0-5.500z" fill="#fff" stroke="#333"/><path d="M3 11h5M3 12.500h4" stroke="#99a" stroke-width=".8"/><path d="M8.5 11l4.500-4 2.600 2.600-4.500 4z" fill="#58c828" stroke="#2a7a10" stroke-width=".7"/><path d="M8.5 11l-1.200 3.600 3.800-1z" fill="#e8e080"/></svg><svg class="ic" style="left:595px;top:4px;width:16px;height:16px" viewBox="0 0 16 16"><rect x="0.500" y="2.500" width="3" height="2" fill="#fff" stroke="#111"/><path d="M5 1h7a2 2 0 0 1 0 5h-4l-2 2v-2h-1a2 2 0 0 1 0-5z" fill="#fff" stroke="#333" stroke-width="1"/><path d="M6 3.5h5" stroke="#aab" stroke-width=".8"/><path d="M9 5l4.500-4 2.600 2.600-4.500 4z" fill="#58c828" stroke="#2a7a10" stroke-width=".7"/><path d="M9 5l-1.200 3.600 3.800-1z" fill="#e8e080"/><path d="M0.500 12.500h3.500M4.500 10v5M6.500 10v5M6.500 12.500h3M14 12.500h1.500" stroke="#111" stroke-width="1.200" fill="none"/><path d="M11 10.500q-2 2 0 4M13 10.500q2 2 0 4" stroke="#111" stroke-width="1.200" fill="none"/></svg><svg class="ic" style="left:617px;top:4px;width:16px;height:16px" viewBox="0 0 16 16"><path d="M2 1h7a2 2 0 0 1 0 5h-4l-2 2v-2h-1a2 2 0 0 1 0-5z" fill="#fff" stroke="#333" stroke-width="1"/><path d="M3 3.5h5" stroke="#aab" stroke-width=".8"/><path d="M9 5l4.500-4 2.600 2.600-4.500 4z" fill="#58c828" stroke="#2a7a10" stroke-width=".7"/><path d="M9 5l-1.200 3.600 3.800-1z" fill="#e8e080"/><path d="M0.500 12.500h3M13 12.500h2.500" stroke="#111" stroke-width="1.300"/><path d="M6 10.500q-3 2 0 4M10.500 10.500q3 2 0 4" stroke="#111" stroke-width="1.300" fill="none"/></svg><div class="sep" style="left:638px;top:4px"></div><svg class="ic" style="left:645px;top:4px;width:16px;height:16px" viewBox="0 0 16 16"><rect x="0.500" y="2.500" width="3" height="2" fill="#eee" stroke="#a6a6bc"/><path d="M5 1h7a2 2 0 0 1 0 5h-4l-2 2v-2h-1a2 2 0 0 1 0-5z" fill="#fff" stroke="#a6a6bc" stroke-width="1"/><path d="M6 3.5h5" stroke="#aab" stroke-width=".8"/><circle cx="11" cy="5" r="2.500" fill="#c4c4d4"/><path d="M0.500 12.500h3M4.500 10v5M6.500 10v5" stroke="#a6a6bc" fill="none"/><rect x="8" y="10" width="7.500" height="5" fill="#eee" stroke="#c4c4d4"/><path d="M8 12.500h7.500M10.500 10v5M13 10v5" stroke="#c4c4d4"/></svg><div class="sep" style="left:666px;top:4px"></div><svg class="ic" style="left:673px;top:4px;width:16px;height:16px" viewBox="0 0 16 16"><rect x="0.500" y="2.500" width="3" height="2" fill="#fff" stroke="#111"/><path d="M5 1h7a2 2 0 0 1 0 5h-4l-2 2v-2h-1a2 2 0 0 1 0-5z" fill="#fff" stroke="#333" stroke-width="1"/><path d="M6 3.5h5" stroke="#aab" stroke-width=".8"/><path d="M0.500 12.500h3M4.500 10v5M6.500 10v5" stroke="#111" stroke-width="1.200" fill="none"/><rect x="8" y="9.500" width="7.500" height="6" fill="#2838b8"/><path d="M8 12.500h7.500M10.500 11v4.500M13 11v4.500" stroke="#fff" stroke-width=".9"/></svg><div class="sep" style="left:694px;top:4px"></div><svg class="ic" style="left:701px;top:4px;width:16px;height:16px" viewBox="0 0 16 16"><path d="M1.500 1.500h10v13h-10z" fill="#ececf4" stroke="#a6a6bc"/><path d="M3 4h7M3 6h7M3 8h7M3 10h7M3 12h5" stroke="#a6a6bc" stroke-width=".8"/><path d="M9 8h5v5h-5z" fill="#ececf4" stroke="#a6a6bc"/></svg><svg class="ic" style="left:723px;top:4px;width:16px;height:16px" viewBox="0 0 16 16"><path d="M5 1.500h7v4" fill="none" stroke="#a6a6bc"/><circle cx="9" cy="9" r="4" fill="#f0f0f6" stroke="#a6a6bc" stroke-width="1.300"/><path d="M12 12l3 3" stroke="#a6a6bc" stroke-width="1.600"/><path d="M5 5l-4.500 3 4.500 3z" fill="#c4c4d4"/></svg><svg class="ic" style="left:745px;top:4px;width:16px;height:16px" viewBox="0 0 16 16"><path d="M5 1.500h7v4" fill="none" stroke="#a6a6bc"/><circle cx="9.500" cy="9" r="4" fill="#f0f0f6" stroke="#a6a6bc" stroke-width="1.300"/><path d="M12.500 12l3 3" stroke="#a6a6bc" stroke-width="1.600"/><path d="M0.500 5l4.500 3-4.500 3z" fill="#c4c4d4"/></svg><div class="sep" style="left:766px;top:4px"></div><svg class="ic" style="left:773px;top:4px;width:16px;height:16px" viewBox="0 0 16 16"><g stroke="#1818d8" stroke-width="1.200" fill="none"><path d="M0.500 3.500h4M5.500 3.500h6M6.500 2v3M4.500 2v3"/><path d="M12 3.500h3.500" stroke-dasharray="1.500 1"/><path d="M0.500 8.500h4M5.500 8.500h6M6.500 7v3M4.500 7v3M7.500 8.500v5h4"/><path d="M12 8.500h3.500M12 13.500h3.500" stroke-dasharray="1.500 1"/></g></svg><svg class="ic" style="left:795px;top:4px;width:16px;height:16px" viewBox="0 0 16 16"><g stroke="#1818d8" stroke-width="1.200" fill="none"><path d="M0.500 4.500h4M5.500 4.500h6M6.500 3v3M4.500 3v3"/><path d="M0.500 9.500h4M5.500 9.500h6M6.500 8v3M4.500 8v3M7.500 9.500v5h4"/><path d="M12 9.500h3.500M12 14.500h3.500" stroke-dasharray="1.500 1"/></g><path d="M7 6l5.500-5 2.500 2.500-5.500 5z" fill="#f01020"/><path d="M7 6l-1 3.500 3.500-1z" fill="#e8d020"/></svg><svg class="ic" style="left:817px;top:4px;width:16px;height:16px" viewBox="0 0 16 16"><rect x="3.500" y="2" width="6" height="8" fill="#fff" stroke="#555" stroke-width=".7"/><path d="M4.500 4h4M4.500 6h4M4.500 8h4" stroke="#667" stroke-width=".7"/><circle cx="8" cy="6.500" r="5" fill="none" stroke="#2a2a8a" stroke-width="1.200"/><path d="M11.500 10.500l4 4.500" stroke="#2a2a8a" stroke-width="1.500"/><rect x="0.500" y="10" width="6" height="5.500" fill="#fff" stroke="#111" stroke-width="1.200"/><rect x="1" y="10.500" width="2.500" height="4.500" fill="#a01010"/></svg><div class="hl" style="left:836px;top:1px"></div><svg class="ic" style="left:839px;top:4px;width:16px;height:16px" viewBox="0 0 16 16"><rect x="4" y="3" width="5" height="7" fill="#fff" stroke="#555" stroke-width=".7"/><circle cx="8" cy="7" r="4.800" fill="none" stroke="#2a2a8a" stroke-width="1.200"/><path d="M11.500 10.500l4 4.500" stroke="#2a2a8a" stroke-width="1.500"/><rect x="0.500" y="10" width="6" height="5.500" fill="#fff" stroke="#111" stroke-width="1.200"/><rect x="1" y="10.500" width="2.500" height="4.500" fill="#a01010"/><path d="M8 6l5.500-5 2.300 2.300-5.500 5z" fill="#f01020"/><path d="M8 6l-1 3.300 3.300-1z" fill="#e8d020"/></svg><svg class="ic" style="left:861px;top:4px;width:16px;height:16px" viewBox="0 0 16 16"><rect x="1" y="1" width="13" height="7" fill="#c4c4d4"/><text x="1.500" y="7.500" font-size="7.500" fill="#f4f4f8" textLength="12" lengthAdjust="spacingAndGlyphs" font-family="Liberation Sans,sans-serif" font-weight="bold">Dev</text><circle cx="8.500" cy="10" r="4" fill="#f0f0f6" stroke="#a6a6bc" stroke-width="1.300"/><path d="M11.500 13l3 2.500" stroke="#a6a6bc" stroke-width="1.600"/></svg><svg class="ic" style="left:883px;top:4px;width:16px;height:16px" viewBox="0 0 16 16"><circle cx="7" cy="7" r="5.800" fill="#fff" stroke="#111" stroke-width="1.700"/><path d="M11.500 11.500l4 3.500" stroke="#111" stroke-width="2"/><path d="M3 6h5M5.500 3.500v5M6 9h5" stroke="#111" stroke-width="1.700"/></svg><div class="ov"><i></i><b></b></div></div>
<div class="tb" style="left:3px;top:110px;width:290px;height:24px"><div class="grip" style="left:4px;top:5px;height:14px"></div><div class="hl" style="left:7px;top:1px"></div><svg class="ic" style="left:10px;top:4px;width:16px;height:16px" viewBox="0 0 16 16"><path d="M3.500 5v8.500h5M3.500 8.500h5" stroke="#7a6a50" fill="none"/><path d="M1 1h3l1 1h3v4h-7z" fill="#f8b820" stroke="#c88a10" stroke-width=".7"/><path d="M8.500 6h3l1 1h2.500v4h-6.500z" fill="#f8b820" stroke="#c88a10" stroke-width=".7"/><path d="M8.500 11.500h3l.8.800h2.700v3.500h-6.500z" fill="#f8b820" stroke="#c88a10" stroke-width=".7"/></svg><div class="sep" style="left:31px;top:4px"></div><svg class="ic" style="left:38px;top:4px;width:16px;height:16px" viewBox="0 0 16 16"><rect x="3" y="2" width="10" height="12" rx="1" fill="#a8a8a8" stroke="#111" stroke-width="1.600"/><path d="M0 4.500h3M0 8h3M0 11.500h3M13 4.500h3M13 8h3M13 11.500h3" stroke="#111" stroke-width="1.800"/></svg><div class="sep" style="left:59px;top:4px"></div><svg class="ic" style="left:66px;top:4px;width:16px;height:16px" viewBox="0 0 16 16"><rect x="0.700" y="1.700" width="14.600" height="12.600" fill="#fff" stroke="#3a3a6a" stroke-width="1.200"/><rect x="1.300" y="2.300" width="13.400" height="3" fill="#2a4ad8"/><path d="M2.500 7.500h11M2.500 9.500h11M2.500 11.500h11" stroke="#3a5ac8" stroke-width=".9"/></svg><div class="sep" style="left:87px;top:4px"></div><svg class="ic" style="left:94px;top:4px;width:16px;height:16px" viewBox="0 0 16 16"><rect x="0" y="0.500" width="16" height="7.500" fill="#1a78e0"/><rect x="0" y="8" width="8" height="5.500" fill="#1a58d8"/><path d="M6.500 9.500l-2.500 1.500 2.500 1.500z" fill="#cfe0ff"/><text x="1" y="7.4" font-size="8.500" fill="#fff" textLength="14" lengthAdjust="spacingAndGlyphs" font-family="Liberation Sans,sans-serif" font-weight="bold">Dev</text><path d="M9 8.5h2v2h-2zM13 8.5h2v2h-2zM8 10.5h3.500v5h-3.500zM12.5 10.5h3.500v5h-3.500zM11 11.5h2v2h-2z" fill="#111"/></svg><svg class="ic" style="left:116px;top:4px;width:16px;height:16px" viewBox="0 0 16 16"><rect x="0" y="0.500" width="16" height="7.500" fill="#1a68d8"/><text x="1" y="7.4" font-size="8.500" fill="#fff" textLength="14" lengthAdjust="spacingAndGlyphs" font-family="Liberation Sans,sans-serif" font-weight="bold">Dev</text><rect x="6.500" y="9.500" width="9.500" height="6" fill="#333"/><path d="M7.500 11.500h2M10.500 11.500h2M13.500 11.500h1.500M7.500 13.800h2M10.500 13.800h2M13.500 13.800h1.500" stroke="#fff" stroke-width="1.300"/></svg><svg class="ic" style="left:138px;top:4px;width:16px;height:16px" viewBox="0 0 16 16"><rect x="0" y="0.500" width="16" height="7.500" fill="#c4c4d4"/><text x="1" y="7.400" font-size="8.500" fill="#f4f4f8" textLength="14" lengthAdjust="spacingAndGlyphs" font-family="Liberation Sans,sans-serif" font-weight="bold">Dev</text><text x="1.500" y="14.800" font-size="6.500" fill="#a6a6bc" textLength="13" lengthAdjust="spacingAndGlyphs" font-family="Liberation Sans,sans-serif" font-weight="bold">CC-L</text></svg><div class="sep" style="left:159px;top:4px"></div><svg class="ic" style="left:166px;top:4px;width:16px;height:16px" viewBox="0 0 16 16"><rect x="0" y="0" width="16" height="7.500" fill="#1a68d8"/><text x="1" y="7" font-size="8.500" fill="#fff" textLength="14" lengthAdjust="spacingAndGlyphs" font-family="Liberation Sans,sans-serif" font-weight="bold">Dev</text><ellipse cx="9" cy="12" rx="5" ry="3" fill="#fff" stroke="#111" stroke-width="1.200"/><circle cx="9" cy="12" r="2" fill="#7a2010"/><circle cx="9" cy="12" r=".9" fill="#000"/></svg><div class="dda" style="left:184px;top:10px"></div><svg class="ic" style="left:196px;top:4px;width:16px;height:16px" viewBox="0 0 16 16"><path d="M0.500 3.500h8M4.500 0v7" stroke="#333" stroke-width=".9"/><ellipse cx="4.500" cy="3.500" rx="3.300" ry="2" fill="none" stroke="#333" stroke-width=".8"/><rect x="2.500" y="7.500" width="4" height="8" fill="#555" stroke="#222" stroke-width=".8"/><circle cx="11" cy="10" r="2.800" fill="#fff" stroke="#111" stroke-width="1.300"/><path d="M13 12.500l2.500 3" stroke="#111" stroke-width="1.600"/></svg><div class="dda" style="left:214px;top:10px"></div><div class="sep" style="left:225px;top:4px"></div><svg class="ic" style="left:232px;top:4px;width:16px;height:16px" viewBox="0 0 16 16"><path d="M8 0.800a6.500 6.500 0 1 1-3 12.300l-1 2.400-.5-3.400a6.500 6.500 0 0 1 4.500-11.300z" fill="#f2f2f8" stroke="#c4c4d4" stroke-width="1.200"/><text x="8" y="11.500" text-anchor="middle" font-size="10.500" fill="#a6a6bc" font-family="Liberation Sans,sans-serif" font-weight="bold">?</text></svg><div class="sep" style="left:253px;top:4px"></div><svg class="ic" style="left:260px;top:4px;width:16px;height:16px" viewBox="0 0 16 16"><path d="M2.500 0.500h4v3h-4zM9.500 0.500h4v3h-4z" fill="#222"/><path d="M1 3.500h6.500v12h-6.500zM8.500 3.500h6.500v12h-6.500z" fill="#333"/><path d="M2.500 5v10M10 5v10" stroke="#999" stroke-width="1.200"/><rect x="6.500" y="5" width="3" height="4" fill="#222"/></svg><div class="ov"><i></i><b></b></div></div>
<div id="nav">
<div class="nhead"><div class="grip" style="left:5px;top:6px;height:18px"></div><span class="nt">導航</span><svg class="ic" style="left:166px;top:8px;width:9px;height:11px" viewBox="0 0 9 11"><path d="M2.500 0.500h4v5h-4zM0.500 5.500h8M4.500 5.500v5" fill="none" stroke="#000" stroke-width="1.100"/><path d="M5.500 1v4" stroke="#000"/></svg><svg class="ic" style="left:181px;top:9px;width:9px;height:9px" viewBox="0 0 9 9"><path d="M0.700 0.700L8.300 8.300M8.300 0.700L0.700 8.300" stroke="#000" stroke-width="1.600"/></svg></div>
<div class="ncap">工程</div>
<div class="ntb"><svg class="ic" style="left:5px;top:5px;width:16px;height:16px" viewBox="0 0 16 16"><path d="M1.500 3.500h8.500v11h-8.500z" fill="#fff" stroke="#444"/><path d="M11.500 0.500v7M8 4h7" stroke="#f08a10" stroke-width="2.400"/><path d="M11.500 1.500v5M9 4h5" stroke="#f8b040" stroke-width=".8"/></svg><svg class="ic" style="left:28px;top:5px;width:16px;height:16px" viewBox="0 0 16 16"><path d="M0.500 2.500h6l2 2v7h-8z" fill="#eaf0fc" stroke="#7a98d0"/><path d="M2 5.500h4M2 7.500h4" stroke="#7a98d0" stroke-width=".8"/><path d="M6.500 6.500h6l2.500 2.500v6h-8.500z" fill="#f4f8ff" stroke="#5a80c8"/><path d="M8 10h5M8 12h5M8 14h5" stroke="#5a80c8" stroke-width=".8"/></svg><svg class="ic" style="left:50px;top:5px;width:16px;height:16px" viewBox="0 0 16 16"><rect x="1.500" y="2.500" width="10" height="11" fill="#dcdce6" stroke="#c4c4d4"/><rect x="4" y="1" width="5" height="3" fill="#eee" stroke="#a6a6bc" stroke-width=".8"/><path d="M7.500 7.500h5l2 2v5.500h-7z" fill="#f4f4f8" stroke="#a6a6bc"/></svg><svg class="ic" style="left:72px;top:5px;width:16px;height:16px" viewBox="0 0 16 16"><path d="M1.500 0.500h5l2 2v7h-7z" fill="#fff" stroke="#444"/><path d="M3 4h4M3 6h4" stroke="#666" stroke-width=".8"/><circle cx="10.500" cy="10.500" r="5" fill="#1a68c8" stroke="#0a4898" stroke-width=".8"/><rect x="9.700" y="9.500" width="1.800" height="4" fill="#fff"/><circle cx="10.600" cy="7.600" r="1.100" fill="#fff"/></svg><svg class="ic" style="left:95px;top:5px;width:16px;height:16px" viewBox="0 0 16 16"><path d="M2.500 0.500h8l3 3v12h-11z" fill="#d8ecf8" stroke="#6a90c8"/><path d="M8 4a4 4 0 0 1 3.500 6l1.300.8-3.800 1 -.5-3.800 1.300.8a2.300 2.300 0 0 0-1.800-3.300zM8 13a4 4 0 0 1-3.500-6l-1.300-.8 3.800-1 .5 3.800-1.300-.8a2.300 2.300 0 0 0 1.800 3.300z" fill="#18a838"/></svg><div class="sep" style="left:115px;top:4px"></div><svg class="ic" style="left:122px;top:4px;width:16px;height:16px" viewBox="0 0 16 16"><path d="M4 0.500h7l-1 8h-8z" fill="#555" stroke="#333" stroke-width=".6"/><path d="M0 9.500l3-1h6l-1 1.500z" fill="#888"/><rect x="7" y="4" width="3.500" height="11" fill="#e83018"/><rect x="10.500" y="5" width="3.500" height="10" fill="#ddd" stroke="#555" stroke-width=".7"/><path d="M7 8h3.500M7 11h3.500" stroke="#901808" stroke-width=".8"/></svg><div class="dda" style="left:138px;top:11px"></div></div>
<div class="tree">
<div class="trow" style="top:1px"><div class="exp" style="left:4px;top:4px"><i></i><b></b></div><div class="hdot" style="left:14px;top:8px;width:5px"></div><svg class="ic" style="left:19px;top:2px;width:16px;height:16px" viewBox="0 0 16 16"><rect x="1" y="7" width="14" height="8.500" rx="1" fill="#e8b020" stroke="#a87808" stroke-width=".8"/><rect x="3" y="0.500" width="9" height="7" rx="1" fill="#3a3a3a"/><path d="M3 3h9" stroke="#777" stroke-width=".8"/><rect x="4" y="9" width="3" height="5" fill="#f8e080"/><path d="M5.500 14.500l8-11" stroke="#1848c8" stroke-width="2.400"/><path d="M12.500 1.500l2.500 2.500" stroke="#1848c8" stroke-width="2.800"/></svg><span class="tl" style="left:38px">參數</span></div>
<div class="trow" style="top:19px"><div class="hdot" style="left:9px;top:8px;width:10px"></div><svg class="ic" style="left:19px;top:2px;width:16px;height:16px" viewBox="0 0 16 16"><circle cx="6.500" cy="6" r="6" fill="#1a78d8"/><path d="M3 2q3-1 4 1t-2 3-3 0zM8 7q3 0 3 2t-3 2z" fill="#38b838"/><rect x="5.500" y="5.500" width="7" height="10" fill="#f0f4fa" stroke="#6a7a9a" stroke-width=".8"/><path d="M7 8h3M7 10h3M7 12h3" stroke="#c04040" stroke-width=".9"/><path d="M9.500 11.500l2 2 4-5.500" stroke="#209820" stroke-width="1.800" fill="none"/></svg><span class="tl" style="left:38px">全域元件註解</span></div>
<div class="trow" style="top:37px"><div class="exp" style="left:4px;top:4px"><i></i><b></b></div><div class="hdot" style="left:14px;top:8px;width:5px"></div><svg class="ic" style="left:19px;top:2px;width:16px;height:16px" viewBox="0 0 16 16"><rect x="1" y="8" width="14" height="7.500" rx="1" fill="#d8a820" stroke="#8a6808" stroke-width=".8"/><rect x="5" y="1.500" width="10" height="7" fill="#58b8f0" stroke="#2a4a6a" stroke-width=".9"/><rect x="4" y="9" width="11" height="3" fill="#333"/><path d="M1.500 2.500l6.500 6" stroke="#2a9a2a" stroke-width="2.600"/><path d="M3 13h9" stroke="#f8e080" stroke-width="1.200"/></svg><span class="tl" style="left:38px">程式設定</span></div>
<div class="trow" style="top:55px"><div class="exp" style="left:4px;top:4px"><i></i></div><div class="hdot" style="left:14px;top:8px;width:5px"></div><svg class="ic" style="left:19px;top:2px;width:16px;height:16px" viewBox="0 0 16 16"><path d="M1 5h5l1.500-2h7.500v12.500h-14z" fill="#f0d040" stroke="#c8a010" stroke-width=".8"/><circle cx="5" cy="4" r="2.600" fill="#f08aa0"/><rect x="9" y="1" width="5" height="5" fill="#78c860"/><rect x="3" y="8.500" width="10" height="5" fill="#f8e890" stroke="#d8b830" stroke-width=".6"/></svg><span class="tl" style="left:38px">程式組件</span></div>
<div class="trow" style="top:73px"><div class="exp" style="left:23px;top:4px"><i></i></div><div class="hdot" style="left:33px;top:8px;width:5px"></div><svg class="ic" style="left:38px;top:2px;width:16px;height:16px" viewBox="0 0 16 16"><path d="M2.500 3h4v9h-4z" fill="#aab4d0" stroke="#5a6888" stroke-width=".7"/><path d="M4.500 1h5.500l3 3v8h-8.500z" fill="#dfe5f3" stroke="#5a6888" stroke-width=".8"/><path d="M10 1v3h3" fill="#f6f8fc" stroke="#5a6888" stroke-width=".7"/><path d="M0.800 7.500h14.400q.6 0 .5.800l-.9 6.200q-.1.800-.9.800h-11.800q-.8 0-.9-.8l-.9-6.200q-.1-.8.500-.8z" fill="#e2cf98" stroke="#8a7440" stroke-width=".8"/><path d="M2 9h12" stroke="#f6ecc8" stroke-width="1"/><path d="M2.500 14h11" stroke="#b89c58" stroke-width="1"/></svg><span class="tl" style="left:57px">程式</span></div>
<div class="trow" style="top:91px"><div class="hdot" style="left:47px;top:8px;width:10px"></div><svg class="ic" style="left:57px;top:2px;width:16px;height:16px" viewBox="0 0 14 15"><path d="M1.500 0.500h8l3 3v11h-11z" fill="#f4f8fc" stroke="#6a8ab0"/><path d="M9.500 0.500v3h3" fill="#d8e4f0" stroke="#6a8ab0" stroke-width=".8"/><path d="M2 8.500h3M9 8.500h3.500M5.500 5.500v6M8.500 5.500v6" stroke="#e01818" stroke-width="1.500"/></svg><span class="tl sel" style="left:76px">MAIN</span></div>
<div class="trow" style="top:109px"><div class="hdot" style="left:28px;top:8px;width:10px"></div><svg class="ic" style="left:38px;top:2px;width:16px;height:16px" viewBox="0 0 16 16"><path d="M2.500 3h4v9h-4z" fill="#aab4d0" stroke="#5a6888" stroke-width=".7"/><path d="M4.500 1h5.500l3 3v8h-8.500z" fill="#dfe5f3" stroke="#5a6888" stroke-width=".8"/><path d="M10 1v3h3" fill="#f6f8fc" stroke="#5a6888" stroke-width=".7"/><path d="M0.800 7.500h14.400q.6 0 .5.800l-.9 6.200q-.1.800-.9.800h-11.800q-.8 0-.9-.8l-.9-6.200q-.1-.8.500-.8z" fill="#e2cf98" stroke="#8a7440" stroke-width=".8"/><path d="M2 9h12" stroke="#f6ecc8" stroke-width="1"/><path d="M2.500 14h11" stroke="#b89c58" stroke-width="1"/></svg><span class="tl" style="left:57px">局部元件註解</span></div>
<div class="trow" style="top:127px"><div class="exp" style="left:4px;top:4px"><i></i><b></b></div><div class="hdot" style="left:14px;top:8px;width:5px"></div><svg class="ic" style="left:19px;top:2px;width:16px;height:16px" viewBox="0 0 16 16"><rect x="1" y="4" width="14" height="11.500" rx="1.500" fill="#e0b020" stroke="#8a6808" stroke-width=".8"/><rect x="4" y="0.500" width="8" height="4" fill="#222"/><rect x="3.500" y="4" width="9.500" height="9" fill="#333"/><circle cx="8" cy="9" r="4" fill="#e8e8e8"/><path d="M8 9l0-4a4 4 0 0 1 3.500 6z" fill="#e02020"/><path d="M8 9l3.500 2a4 4 0 0 1-6.500.5z" fill="#20a020"/><path d="M8 9l-3 2.500a4 4 0 0 1 3-6.500z" fill="#2060d0"/></svg><span class="tl" style="left:38px">元件記憶體</span></div>
<div class="vdot" style="left:8px;top:14px;height:122px"></div>
<div class="vdot" style="left:27px;top:73px;height:45px"></div>
<div class="vdot" style="left:47px;top:90px;height:9px"></div>
</div>
<div class="nsplit"><i></i></div>
<div class="nbtn act" style="top:482px"><svg class="ic" style="left:7px;top:3px;width:26px;height:26px" viewBox="0 0 26 26"><path d="M7 1l10-1-1 14h-10z" fill="#4a4a52" stroke="#2a2a30" stroke-width=".7"/><path d="M8.500 3l7-.6-.7 9.500h-7z" fill="#77808c"/><path d="M1 16.500l5-2.500h9l-3 3z" fill="#8a8a92"/><rect x="11" y="7" width="6" height="17" fill="#e83818"/><path d="M11 12h6M11 16h6M11 20h6" stroke="#8a1808" stroke-width="1"/><rect x="17" y="9" width="5.500" height="15" fill="#d0d0d0" stroke="#444" stroke-width=".8"/><path d="M17 13h5.500M17 17h5.500M17 21h5.500" stroke="#333" stroke-width="1.200"/></svg><span>工程</span></div>
<div class="nbtn" style="top:513px"><svg class="ic" style="left:5px;top:3px;width:28px;height:28px" viewBox="0 0 28 28"><path d="M1 4q6-2 12 1 6-3 12-1v15q-6-2-12 1-6-3-12-1z" fill="#f4ecd8" stroke="#9a8a70" stroke-width=".9"/><path d="M13 5v15" stroke="#b0a080"/><path d="M1 19v1.500q6-2 12 1 6-3 12-1v-1.500" fill="none" stroke="#333" stroke-width="1.300"/><path d="M4 8q4-1 7 .5M4 11q4-1 7 .5M15 8.500q3-1.500 7-.5" stroke="#d0c4a8"/><circle cx="21.500" cy="13" r="2.800" fill="#f0d030"/><path d="M17.500 27q0-10 4-10t4 10z" fill="#e8d028"/><path d="M18 27q1-4 3.500-4t3.500 4z" fill="#58c8a0"/></svg><span>使用者庫</span></div>
<div class="nbtn" style="top:545px"><svg class="ic" style="left:6px;top:4px;width:26px;height:26px" viewBox="0 0 26 26"><rect x="1" y="7" width="15" height="15" fill="#38a848" stroke="#1a6a28" stroke-width=".8"/><rect x="3" y="9" width="11" height="9" fill="#e8f4e8"/><path d="M6 3l13-2 1 12-13 2z" fill="#18a8e8" stroke="#0a5888" stroke-width=".9"/><path d="M8 5l9-1.500.5 4-9 1.500z" fill="#68d0f8"/><rect x="15.500" y="8" width="9" height="17.500" fill="#3a3a3a" stroke="#111" stroke-width=".7"/><path d="M16.500 11h7M16.500 14h7M16.500 17h7M16.500 20h7M16.500 23h7" stroke="#888" stroke-width="1"/></svg><span>連接目標</span></div>
<div class="nbtn last" style="top:577px"><svg class="ic" style="left:182px;top:10px;width:8px;height:6px" viewBox="0 0 8 6"><path d="M0.700 0.500l2.600 2.500-2.600 2.500M4.200 0.500l2.600 2.500-2.600 2.500" fill="none" stroke="#000" stroke-width="1.400"/></svg><div class="dda" style="left:183px;top:19px;border-width:3px;border-top-width:3px"></div></div>
</div>
<div id="tabstrip"></div><div id="gapstrip"></div>
<svg class="abs" style="left:198px;top:136px" width="250" height="29" viewBox="0 0 250 29"><defs><linearGradient id="tg" x1="0" y1="0" x2="0.150" y2="1"><stop offset="0" stop-color="#fffdf8"/><stop offset=".3" stop-color="#ffecc8"/><stop offset=".75" stop-color="#fdbd66"/><stop offset="1" stop-color="#fbb152"/></linearGradient></defs><path d="M3.500 27v-3l25-21.500h211.500q3.500 0 3.500 3.500v21z" fill="url(#tg)" stroke="#3a3f78" stroke-width="1"/><path d="M5 24.500l24-20.700h210" fill="none" stroke="#fff" stroke-width="1.200" opacity=".85"/></svg>
<svg class="ic" style="left:231px;top:143px;width:14px;height:15px" viewBox="0 0 14 15"><path d="M1.500 0.500h8l3 3v11h-11z" fill="#f4f8fc" stroke="#6a8ab0"/><path d="M9.500 0.500v3h3" fill="#d8e4f0" stroke="#6a8ab0" stroke-width=".8"/><path d="M2 8.500h3M9 8.500h3.500M5.500 5.500v6M8.500 5.500v6" stroke="#e01818" stroke-width="1.500"/></svg>
<div class="tabt act" style="left:249px;top:139px"><span class="l">[PRG]R</span> 監視寫入 執…</div>
<div class="tabx" style="left:421px;top:141px"><svg class="ic" style="left:3px;top:3px;width:9px;height:9px" viewBox="0 0 9 9"><path d="M1 1L8 8M8 1L1 8" stroke="#9c9a90" stroke-width="1.800"/></svg></div>
<div class="tab2" style="left:441px;top:138px"></div>
<svg class="ic" style="left:450px;top:141px;width:16px;height:17px" viewBox="0 0 16 16"><circle cx="6.500" cy="6" r="6" fill="#1a78d8"/><path d="M3 2q3-1 4 1t-2 3-3 0zM8 7q3 0 3 2t-3 2z" fill="#38b838"/><rect x="5.500" y="5.500" width="7" height="10" fill="#f0f4fa" stroke="#6a7a9a" stroke-width=".8"/><path d="M7 8h3M7 10h3M7 12h3" stroke="#c04040" stroke-width=".9"/><path d="M9.500 11.500l2 2 4-5.500" stroke="#209820" stroke-width="1.800" fill="none"/></svg>
<div class="tabt" style="left:468px;top:139px">元件註解 <span class="l">COMMENT</span></div>
<svg class="ic" style="left:1320px;top:143px;width:6px;height:9px" viewBox="0 0 6 9"><path d="M5.300 0.800v7.400l-4.600-3.700z" fill="none" stroke="#000" stroke-width="1"/></svg><svg class="ic" style="left:1337px;top:143px;width:6px;height:9px" viewBox="0 0 6 9"><path d="M0.700 0.800v7.400l4.600-3.700z" fill="none" stroke="#000" stroke-width="1"/></svg>
<div class="dda" style="left:1352px;top:148px;border-width:4px;border-top-width:4px"></div>
<div id="edframe"></div><div id="edorange"></div><div id="ed">
<div class="ln" style="left:69px;top:0px;width:1px;height:578px"></div><div class="ln" style="left:893px;top:0px;width:1px;height:578px"></div><div class="ln" style="left:137px;top:141px;width:1px;height:172px"></div><div class="ln" style="left:137px;top:426px;width:1px;height:152px"></div><div class="ln" style="left:70px;top:28px;width:474px;height:1px"></div><div class="sn" style="left:24px;top:19px">30</div><div class="ct" style="left:99px;top:19px"></div><div class="dl" style="left:63px;top:2px">M8000</div><div class="br" style="left:544px;top:20px"></div><div class="br r" style="left:887px;top:20px"></div><div class="ln" style="left:891px;top:28px;width:2px;height:1px"></div><div class="it" style="left:551.5px;top:20px">TO</div><div class="it" style="left:612px;top:20px">K0</div><div class="it" style="left:679px;top:20px">K1</div><div class="it" style="left:745px;top:20px">D200</div><div class="it" style="left:821px;top:20px">K1</div><div class="vl" style="left:741px;top:38px">10000</div><div class="ln" style="left:70px;top:84px;width:474px;height:1px"></div><div class="sn" style="left:24px;top:75px">40</div><div class="ct" style="left:99px;top:75px"></div><div class="dl" style="left:63px;top:58px">M8000</div><div class="br" style="left:544px;top:76px"></div><div class="br r" style="left:887px;top:76px"></div><div class="ln" style="left:891px;top:84px;width:2px;height:1px"></div><div class="it" style="left:551.5px;top:76px">TO</div><div class="it" style="left:612px;top:76px">K0</div><div class="it" style="left:679px;top:76px">K2</div><div class="it" style="left:745px;top:76px">D600</div><div class="it" style="left:821px;top:76px">K1</div><div class="vl" style="left:741px;top:94px">5000</div><div class="ln" style="left:70px;top:141px;width:474px;height:1px"></div><div class="sn" style="left:24px;top:132px">50</div><div class="ct" style="left:99px;top:132px"></div><div class="dl" style="left:63px;top:115px">M800</div><div class="br" style="left:544px;top:133px"></div><div class="br r" style="left:887px;top:133px"></div><div class="ln" style="left:891px;top:141px;width:2px;height:1px"></div><div class="it" style="left:551.5px;top:133px">TO</div><div class="it" style="left:612px;top:133px">K1</div><div class="it" style="left:679px;top:133px">K17</div><div class="it" style="left:747px;top:133px">H0</div><div class="it" style="left:821px;top:133px">K1</div><div class="ln" style="left:137px;top:198px;width:407px;height:1px"></div><div class="br" style="left:544px;top:190px"></div><div class="br r" style="left:887px;top:190px"></div><div class="ln" style="left:891px;top:198px;width:2px;height:1px"></div><div class="it" style="left:551.5px;top:190px">TO</div><div class="it" style="left:612px;top:190px">K1</div><div class="it" style="left:679px;top:190px">K17</div><div class="it" style="left:747px;top:190px">H2</div><div class="it" style="left:821px;top:190px">K1</div><div class="ln" style="left:137px;top:255px;width:407px;height:1px"></div><div class="br" style="left:544px;top:247px"></div><div class="br r" style="left:887px;top:247px"></div><div class="ln" style="left:891px;top:255px;width:2px;height:1px"></div><div class="it" style="left:551px;top:247px">FROM</div><div class="it" style="left:612px;top:247px">K1</div><div class="it" style="left:679px;top:247px">K0</div><div class="it" style="left:744px;top:247px">K2M100</div><div class="it" style="left:821px;top:247px">K2</div><div class="vl" style="left:741px;top:265px">158</div><div class="ln" style="left:137px;top:312px;width:543px;height:1px"></div><div class="br" style="left:680px;top:304px"></div><div class="br r" style="left:887px;top:304px"></div><div class="ln" style="left:891px;top:312px;width:2px;height:1px"></div><div class="it" style="left:686px;top:304px">MOV</div><div class="it" style="left:745px;top:304px">K4M100</div><div class="it" style="left:819.5px;top:304px">D100</div><div class="vl" style="left:741px;top:322px">926</div><div class="vl" style="left:808px;top:322px">926</div><div class="ln" style="left:70px;top:369px;width:542px;height:1px"></div><div class="sn" style="left:24px;top:360px">83</div><div class="ct" style="left:99px;top:360px"></div><div class="dl" style="left:63px;top:343px">M8012</div><div class="br" style="left:612px;top:361px"></div><div class="br r" style="left:887px;top:361px"></div><div class="ln" style="left:891px;top:369px;width:2px;height:1px"></div><div class="it" style="left:618px;top:361px">ADD</div><div class="it" style="left:679px;top:361px">K19000</div><div class="it" style="left:745px;top:361px">D100</div><div class="it" style="left:819.5px;top:361px">D300</div><div class="vl" style="left:741px;top:379px">926</div><div class="vl" style="left:808px;top:379px">19926</div><div class="ln" style="left:70px;top:426px;width:28px;height:1px"></div><div class="ln" style="left:108px;top:426px;width:436px;height:1px"></div><div class="sn" style="left:24px;top:417px">91</div><div class="ln" style="left:98px;top:417px;width:1px;height:17px"></div><div class="ln" style="left:107px;top:417px;width:1px;height:17px"></div><div class="dl" style="left:63px;top:400px">M820</div><div class="br" style="left:544px;top:418px"></div><div class="br r" style="left:887px;top:418px"></div><div class="ln" style="left:891px;top:426px;width:2px;height:1px"></div><div class="it" style="left:551.5px;top:418px">TO</div><div class="it" style="left:612px;top:418px">K1</div><div class="it" style="left:679px;top:418px">K17</div><div class="it" style="left:747px;top:418px">H1</div><div class="it" style="left:821px;top:418px">K1</div><div class="ln" style="left:137px;top:482px;width:407px;height:1px"></div><div class="br" style="left:544px;top:474px"></div><div class="br r" style="left:887px;top:474px"></div><div class="ln" style="left:891px;top:482px;width:2px;height:1px"></div><div class="it" style="left:551.5px;top:474px">TO</div><div class="it" style="left:612px;top:474px">K1</div><div class="it" style="left:679px;top:474px">K17</div><div class="it" style="left:747px;top:474px">H3</div><div class="it" style="left:821px;top:474px">K1</div><div class="ln" style="left:137px;top:539px;width:407px;height:1px"></div><div class="br" style="left:544px;top:531px"></div><div class="br r" style="left:887px;top:531px"></div><div class="ln" style="left:891px;top:539px;width:2px;height:1px"></div><div class="it" style="left:551px;top:531px">FROM</div><div class="it" style="left:612px;top:531px">K1</div><div class="it" style="left:679px;top:531px">K0</div><div class="it" style="left:744px;top:531px">K2M100</div><div class="it" style="left:821px;top:531px">K1</div><div class="vl" style="left:741px;top:549px">158</div><div class="selbox" style="left:69px;top:114px"></div>
<div class="vsb"><div class="sbtn" style="top:1px"><svg class="ic" style="left:4px;top:5px;width:9px;height:6px" viewBox="0 0 9 6"><path d="M0.800 5.200l3.700-3.700 3.700 3.700" fill="none" stroke="#4d6185" stroke-width="1.900"/></svg></div><div class="sbtn thumb" style="top:138px;height:20px"><i></i></div><div class="sbtn" style="top:558px"><svg class="ic" style="left:4px;top:6px;width:9px;height:6px" viewBox="0 0 9 6"><path d="M0.800 0.800l3.700 3.700 3.700-3.700" fill="none" stroke="#4d6185" stroke-width="1.900"/></svg></div></div>
</div>
<div id="status">
<span class="st" style="left:360px">繁體中文</span>
<span class="st" style="left:457px">無標籤</span>
<span class="st" style="left:793px"><span class="l">FX3U/FX3UC</span></span>
<span class="st" style="left:902px">本站</span>
<span class="st" style="left:1059px"><span class="l">50/133</span>步</span>
<span class="st" style="left:1227px">插入</span>
<span class="st" style="left:1285px"><span class="l">CAP</span></span>
<span class="st" style="left:1324px"><span class="l">NUM</span></span>
<div class="ssep" style="left:353px"></div>
<div class="ssep" style="left:451px"></div>
<div class="ssep" style="left:539px"></div>
<div class="ssep" style="left:787px"></div>
<div class="ssep" style="left:896px"></div>
<div class="ssep" style="left:1052px"></div>
<div class="ssep" style="left:1220px"></div>
<div class="ssep" style="left:1280px"></div>
<div class="ssep" style="left:1319px"></div>
</div><div id="bottomline"></div>
</body></html>
